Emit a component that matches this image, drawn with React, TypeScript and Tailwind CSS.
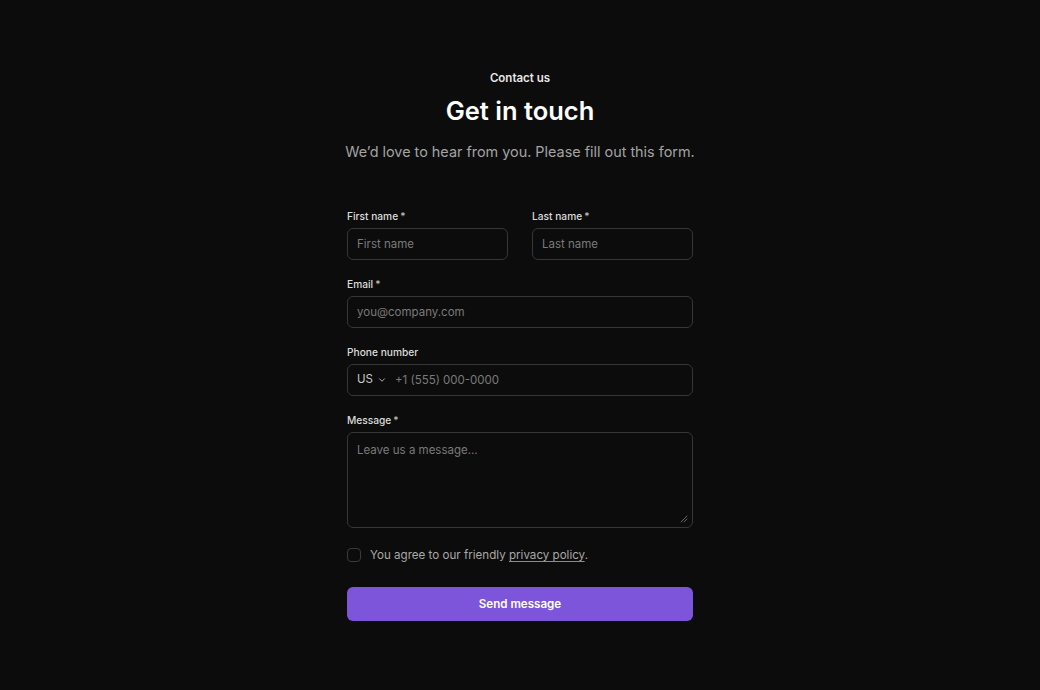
import React from "react";

const inputCls =
  "h-[32px] w-full rounded-[6px] border border-[#363636] bg-[#0c0c0c] px-[9px] text-[11.5px] text-white placeholder:text-[#7a7a7a] outline-none";

export default function App() {
  return (
    <div
      className="w-[1040px] h-[690px] bg-[#0c0c0c] flex justify-center text-white"
      style={{ fontFamily: "Inter, 'Noto Sans', sans-serif" }}
    >
      <div className="w-[346px] flex flex-col pt-[71px]">
        <div className="flex flex-col items-center">
          <p className="text-[11.5px] leading-[14px] font-semibold text-[#e8e8e8]">Contact us</p>
          <h1 className="mt-[11px] text-[25.5px] leading-[30px] font-semibold text-white">Get in touch</h1>
          <p className="mt-[16px] text-[14.4px] leading-[20px] text-[#a3a3a3] whitespace-nowrap">
            We’d love to hear from you. Please fill out this form.
          </p>
        </div>

        <form className="mt-[48px] flex flex-col">
          <div className="grid grid-cols-2 gap-[24px]">
            <Field label="First name" required>
              <input className={inputCls} placeholder="First name" />
            </Field>
            <Field label="Last name" required>
              <input className={inputCls} placeholder="Last name" />
            </Field>
          </div>

          <div className="mt-[18px]">
            <Field label="Email" required>
              <input className={inputCls} placeholder="you@company.com" />
            </Field>
          </div>

          <div className="mt-[18px]">
            <Field label="Phone number">
              <div className="h-[32px] w-full rounded-[6px] border border-[#363636] bg-[#0c0c0c] flex items-center">
                <div className="flex items-center pl-[9px] pr-[8px] gap-[4px] text-[11.5px] text-[#c8c8c8]">
                  <span>US</span>
                  <svg width="10" height="10" viewBox="0 0 24 24" fill="none" stroke="#bdbdbd" strokeWidth="2.2" strokeLinecap="round" strokeLinejoin="round">
                    <path d="M6 9l6 6 6-6" />
                  </svg>
                </div>
                <input className="flex-1 h-full bg-transparent text-[11.5px] text-white placeholder:text-[#7a7a7a] outline-none" placeholder="+1 (555) 000-0000" />
              </div>
            </Field>
          </div>

          <div className="mt-[18px]">
            <Field label="Message" required>
              <div className="relative">
                <textarea className="block h-[96px] w-full rounded-[6px] border border-[#363636] bg-[#0c0c0c] px-[9px] py-[9px] text-[11.5px] text-white placeholder:text-[#7a7a7a] outline-none resize-none" placeholder="Leave us a message..." />
                <svg className="absolute right-[5px] bottom-[5px]" width="8" height="8" viewBox="0 0 8 8" fill="none" stroke="#6a6a6a" strokeWidth="1" strokeLinecap="round">
                  <path d="M7 1L1 7M7 4L4 7" />
                </svg>
              </div>
            </Field>
          </div>

          <label className="mt-[19px] flex items-center gap-[9px]">
            <span className="w-[14px] h-[14px] rounded-[4px] border border-[#3a3a3a] bg-[#0c0c0c]" />
            <span className="text-[11.6px] leading-[16px] text-[#a8a8a8]">
              You agree to our friendly <span className="underline underline-offset-[2px] decoration-[#8a8a8a]">privacy policy</span>.
            </span>
          </label>

          <button type="button" className="mt-[24px] h-[34px] w-full rounded-[6px] bg-[#7c55da] pt-[1px] text-[11.6px] font-semibold text-white">
            Send message
          </button>
        </form>
      </div>
    </div>
  );
}

function Field({ label, required, children }: { label: string; required?: boolean; children: React.ReactNode }) {
  return (
    <div className="flex flex-col gap-[6px]">
      <span className="text-[10.2px] leading-[12px] font-medium text-[#dcdcdc]">
        {label}
        {required && <span className="ml-[2px] text-[#bdbdbd]">*</span>}
      </span>
      {children}
    </div>
  );
}
